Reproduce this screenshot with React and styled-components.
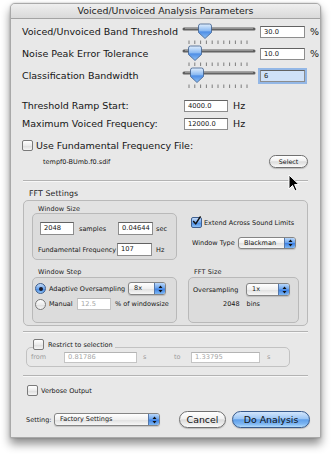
import React from "react";
import styled, { createGlobalStyle } from "styled-components";

const Global = createGlobalStyle`
  html, body { margin: 0; padding: 0; background: #fff; }
  body { font-family: "DejaVu Sans", "Liberation Sans", sans-serif; color: #151515; }
  * { box-sizing: border-box; }
`;

const Page = styled.div`
  width: 334px;
  height: 455px;
  padding: 3px 0 0 10px;
  overflow: hidden;
`;

const Window = styled.div`
  position: relative;
  width: 311px;
  height: 435px;
  background: #e8e8e8;
  border: 1px solid #a9a9a9;
  border-radius: 5px 5px 1px 1px;
  box-shadow: 0 6px 10px rgba(0, 0, 0, 0.45), 0 0 2px rgba(0, 0, 0, 0.25);
  display: flex;
  flex-direction: column;
`;

const TitleBar = styled.div`
  height: 15px;
  border-bottom: 1px solid #a3a3a3;
  border-radius: 4px 4px 0 0;
  background: linear-gradient(#efefef, #d9d9d9);
  font-size: 9.4px;
  line-height: 14px;
  text-align: center;
  color: #222;
`;

const Content = styled.div`
  padding: 7px 12px 0 11px;
  display: flex;
  flex-direction: column;
`;

const SliderRow = styled.div`
  display: flex;
  align-items: flex-start;
  height: 22px;
`;

const Row = styled.div`
  display: flex;
  align-items: center;
  height: ${(p) => p.$h || 12}px;
  margin-top: ${(p) => p.$mt || 0}px;
  margin-left: ${(p) => p.$ml || 0}px;
`;

const Label = styled.span`
  flex: none;
  width: ${(p) => (p.$w ? `${p.$w}px` : "auto")};
  margin-left: ${(p) => p.$ml || 0}px;
  font-size: ${(p) => (p.$small ? 6.5 : 9.5)}px;
  line-height: 12px;
  white-space: nowrap;
  color: ${(p) => (p.$off ? "#9c9c9c" : "#151515")};
`;

const Field = styled.div`
  flex: none;
  width: ${(p) => p.$w}px;
  height: ${(p) => p.$h || 12}px;
  margin-left: ${(p) => p.$ml || 0}px;
  background: ${(p) => (p.$focus ? "#cfe1f8" : "#fff")};
  border: 1px solid ${(p) => (p.$off ? "#c4c4c4" : "#8d8d8d")};
  border-top-color: ${(p) => (p.$off ? "#b4b4b4" : "#626262")};
  box-shadow: ${(p) => (p.$focus ? "0 0 0 2px #93b7e6" : "none")};
  font-size: 6.7px;
  line-height: ${(p) => (p.$h || 12) - 2}px;
  padding-left: 3px;
  color: ${(p) => (p.$off ? "#a5a5a5" : "#111")};
`;

const Check = styled.span`
  flex: none;
  width: 11px;
  height: 11px;
  margin-left: ${(p) => p.$ml || 0}px;
  border: 1px solid ${(p) => (p.$on ? "#3f5f8f" : "#7a7a7a")};
  border-radius: 2px;
  background: ${(p) =>
    p.$on
      ? "linear-gradient(#c5dcf9, #6fa6ec 50%, #4b8de5 55%, #8cc0f5)"
      : "linear-gradient(#ffffff, #ececec 50%, #dedede 55%, #f6f6f6)"};
  display: flex;
  align-items: center;
  justify-content: center;
  overflow: visible;
`;

const Radio = styled(Check)`
  border-radius: 50%;
  border-color: ${(p) => (p.$on ? "#3f5f8f" : "#7a7a7a")};
`;

const Dot = styled.span`
  width: 4px;
  height: 4px;
  border-radius: 50%;
  background: #1b1b2a;
`;

const Separator = styled.div`
  height: 2px;
  margin-top: ${(p) => p.$mt}px;
  margin-left: 1px;
  border-top: 1px solid #b3b3b3;
  border-bottom: 1px solid #f7f7f7;
`;

const Button = styled.div`
  flex: none;
  width: ${(p) => p.$w}px;
  height: ${(p) => p.$h}px;
  margin-left: ${(p) => p.$ml || 0}px;
  border-radius: 999px;
  border: 1px solid ${(p) => (p.$blue ? "#375a8c" : "#707070")};
  background: ${(p) =>
    p.$blue
      ? "linear-gradient(#d3e6fc, #9cc6f5 45%, #5f9fe9 52%, #7db6f2 80%, #b4dcfb)"
      : "linear-gradient(#ffffff, #f1f1f1 45%, #dcdcdc 52%, #ececec 80%, #fbfbfb)"};
  box-shadow: 0 1px 1px rgba(0, 0, 0, 0.2);
  font-size: ${(p) => p.$fs}px;
  line-height: ${(p) => p.$h - 2}px;
  text-align: center;
  color: #111;
`;

const Popup = styled.div`
  flex: none;
  display: flex;
  width: ${(p) => p.$w}px;
  height: ${(p) => p.$h || 12}px;
  margin-left: ${(p) => p.$ml || 0}px;
  border: 1px solid #858585;
  border-radius: 3px;
  background: linear-gradient(#ffffff, #f0f0f0 50%, #e1e1e1 55%, #f7f7f7);
  box-shadow: 0 1px 1px rgba(0, 0, 0, 0.15);
  overflow: hidden;
  font-size: 6.5px;
  line-height: ${(p) => (p.$h || 12) - 2}px;
`;

const PopupText = styled.span`
  flex: 1;
  padding-left: 5px;
  white-space: nowrap;
`;

const PopupCap = styled.span`
  flex: none;
  width: 11px;
  border-left: 1px solid #5577a8;
  background: linear-gradient(#b9d7fa, #6ea6ee 45%, #3f82e4 55%, #7fb8f4);
  display: flex;
  align-items: center;
  justify-content: center;
`;

const GroupTitle = styled.div`
  height: ${(p) => p.$h}px;
  margin-top: ${(p) => p.$mt || 0}px;
  padding-left: ${(p) => p.$pl}px;
  font-size: ${(p) => p.$fs}px;
  line-height: ${(p) => p.$h}px;
  color: #1d1d1d;
  letter-spacing: 0.1px;
`;

const FftBox = styled.div`
  margin: 1px 0 0 1px;
  border: 1px solid #b9b9b9;
  border-radius: 5px;
  background: rgba(0, 0, 0, 0.025);
  padding: 4px 0 2px 8px;
`;

const FftGrid = styled.div`
  display: grid;
  grid-template-columns: 145px 111px;
  column-gap: 11px;
  row-gap: 8px;
`;

const Cell = styled.div`
  display: flex;
  flex-direction: column;
`;

const Inner = styled.div`
  height: ${(p) => p.$h}px;
  border: 1px solid #b9b9b9;
  border-radius: 5px;
  background: rgba(0, 0, 0, 0.025);
  padding: ${(p) => p.$pad};
  display: flex;
  flex-direction: column;
`;

const LegendRow = styled.div`
  position: relative;
  z-index: 1;
  align-self: flex-start;
  display: flex;
  align-items: center;
  height: 11px;
  margin: 6px 0 0 11px;
  padding-right: 2px;
  background: #e8e8e8;
`;

const RestrictBox = styled.div`
  display: flex;
  align-items: center;
  width: 264px;
  height: 20px;
  margin: -3px 0 0 4px;
  padding-left: 4px;
  border: 1px solid #c2c2c2;
  border-radius: 5px;
`;

const Cursor = styled.svg`
  position: absolute;
  left: 277px;
  top: 170px;
`;

const Slider = ({ pos }) => {
  const ticks = Array.from({ length: 11 }, (_, i) => 7 + i * 5.8);
  const c = pos;
  const thumb = `M${c - 6.5},3 Q${c - 6.5},1 ${c - 4.5},1 L${c + 4.5},1 Q${c + 6.5},1 ${c + 6.5},3 L${c + 6.5},9.5 L${c},15.5 L${c - 6.5},9.5 Z`;
  return (
    <svg width="74" height="22" style={{ flex: "none", marginTop: -3 }}>
      <defs>
        <linearGradient id="thumbFill" x1="0" y1="0" x2="0" y2="1">
          <stop offset="0" stopColor="#e2effd" />
          <stop offset="0.45" stopColor="#8dbbf2" />
          <stop offset="0.55" stopColor="#4f8fe6" />
          <stop offset="1" stopColor="#8ec0f4" />
        </linearGradient>
      </defs>
      <line x1="2" y1="6" x2="72" y2="6" stroke="#5e5e5e" strokeWidth="3" strokeLinecap="round" />
      <line x1="3" y1="5.6" x2="71" y2="5.6" stroke="#9a9a9a" strokeWidth="1" />
      {ticks.map((x) => (
        <line key={x} x1={x} y1="17.5" x2={x} y2="21" stroke="#707070" strokeWidth="0.9" />
      ))}
      <path d={thumb} fill="url(#thumbFill)" stroke="#3c5d8c" strokeWidth="0.8" />
    </svg>
  );
};

const CheckBox = ({ on, ml }) => (
  <Check $on={on} $ml={ml}>
    {on && (
      <svg width="11" height="12" viewBox="0 0 11 12" style={{ marginTop: -3 }}>
        <path d="M2 6.5 L4.5 9.5 L10 1" fill="none" stroke="#111" strokeWidth="1.8" strokeLinecap="round" strokeLinejoin="round" />
      </svg>
    )}
  </Check>
);

const RadioButton = ({ on, ml }) => (
  <Radio $on={on} $ml={ml}>
    {on && <Dot />}
  </Radio>
);

const PopupButton = ({ w, h, ml, children }) => (
  <Popup $w={w} $h={h} $ml={ml}>
    <PopupText>{children}</PopupText>
    <PopupCap>
      <svg width="5" height="8" viewBox="0 0 5 8">
        <path d="M2.5 0.5 L4.5 3 L0.5 3 Z M2.5 7.5 L4.5 5 L0.5 5 Z" fill="#111" />
      </svg>
    </PopupCap>
  </Popup>
);

const App = () => (
  <Page>
    <Global />
    <Window>
      <TitleBar>Voiced/Unvoiced Analysis Parameters</TitleBar>
      <Content>
        <SliderRow>
          <Label $w={160}>Voiced/Unvoiced Band Threshold</Label>
          <Slider pos={23} />
          <Field $w={45} $ml={4}>30.0</Field>
          <Label $ml={5}>%</Label>
        </SliderRow>
        <SliderRow>
          <Label $w={160}>Noise Peak Error Tolerance</Label>
          <Slider pos={13} />
          <Field $w={45} $ml={4}>10.0</Field>
          <Label $ml={5}>%</Label>
        </SliderRow>
        <SliderRow>
          <Label $w={160}>Classification Bandwidth</Label>
          <Slider pos={15} />
          <Field $w={45} $ml={4} $focus>6</Field>
        </SliderRow>

        <Row $mt={8}>
          <Label $w={162}>Threshold Ramp Start:</Label>
          <Field $w={44}>4000.0</Field>
          <Label $ml={5}>Hz</Label>
        </Row>
        <Row $mt={6}>
          <Label $w={162}>Maximum Voiced Frequency:</Label>
          <Field $w={44}>12000.0</Field>
          <Label $ml={5}>Hz</Label>
        </Row>
        <Row $mt={10} $h={11}>
          <CheckBox />
          <Label $ml={3}>Use Fundamental Frequency File:</Label>
        </Row>
        <Row $mt={4} $h={13} $ml={21}>
          <Label $small $w={226}>tempf0-BUmb.f0.sdif</Label>
          <Button $w={39} $h={13} $fs={6.3}>Select</Button>
        </Row>

        <Separator $mt={12} />

        <GroupTitle $mt={7} $h={10} $pl={7} $fs={7.8}>FFT Settings</GroupTitle>
        <FftBox>
          <FftGrid>
            <Cell>
              <GroupTitle $h={8} $pl={6} $fs={6.5}>Window Size</GroupTitle>
              <Inner $h={47} $pad="8px 0 0 7px">
                <Row $h={13}>
                  <Field $w={34} $h={13}>2048</Field>
                  <Label $small $w={39} $ml={5}>samples</Label>
                  <Field $w={35} $h={13}>0.04644</Field>
                  <Label $small $ml={3}>sec</Label>
                </Row>
                <Row $h={13} $mt={8} $ml={-2}>
                  <Label $small $w={79}>Fundamental Frequency</Label>
                  <Field $w={35} $h={13}>107</Field>
                  <Label $small $ml={4}>Hz</Label>
                </Row>
              </Inner>
            </Cell>
            <Cell>
              <Row $h={11} $mt={12} $ml={3}>
                <CheckBox on />
                <Label $small $ml={2}>Extend Across Sound Limits</Label>
              </Row>
              <Row $mt={9} $ml={4}>
                <Label $small $w={46}>Window Type</Label>
                <PopupButton w={58}>Blackman</PopupButton>
              </Row>
            </Cell>
            <Cell>
              <GroupTitle $h={9} $pl={6} $fs={6.5}>Window Step</GroupTitle>
              <Inner $h={46} $pad="4px 0 0 2px">
                <Row $h={13}>
                  <RadioButton on />
                  <Label $small $w={79} $ml={3}>Adaptive Oversampling</Label>
                  <PopupButton w={38} h={13}>8x</PopupButton>
                </Row>
                <Row $h={12} $mt={3}>
                  <RadioButton />
                  <Label $small $w={28} $ml={3}>Manual</Label>
                  <Field $w={34} $off>12.5</Field>
                  <Label $small $ml={4}>% of windowsize</Label>
                </Row>
              </Inner>
            </Cell>
            <Cell>
              <GroupTitle $h={9} $pl={6} $fs={6.5}>FFT Size</GroupTitle>
              <Inner $h={46} $pad="5px 0 0 4px">
                <Row $h={13}>
                  <Label $small $w={53}>Oversampling</Label>
                  <PopupButton w={44} h={13}>1x</PopupButton>
                </Row>
                <Row $h={12} $mt={2} $ml={30}>
                  <Label $small>2048</Label>
                  <Label $small $ml={7}>bins</Label>
                </Row>
              </Inner>
            </Cell>
          </FftGrid>
        </FftBox>

        <Separator $mt={5} />

        <LegendRow>
          <CheckBox />
          <Label $small $ml={4}>Restrict to selection</Label>
        </LegendRow>
        <RestrictBox>
          <Label $small $off $w={33}>from</Label>
          <Field $w={73} $h={11} $off>0.81786</Field>
          <Label $small $off $w={31} $ml={6}>s</Label>
          <Label $small $off $w={17}>to</Label>
          <Field $w={69} $h={11} $off>1.33795</Field>
          <Label $small $off $ml={7}>s</Label>
        </RestrictBox>

        <Separator $mt={8} />

        <Row $h={11} $mt={8} $ml={5}>
          <CheckBox />
          <Label $small $ml={3}>Verbose Output</Label>
        </Row>

        <Row $h={17} $mt={15} $ml={4}>
          <Label $small $w={28}>Setting:</Label>
          <PopupButton w={106} h={13}>Factory Settings</PopupButton>
          <Button $w={47} $h={17} $ml={19} $fs={9.4}>Cancel</Button>
          <Button $w={78} $h={17} $ml={6} $fs={9.4} $blue>Do Analysis</Button>
        </Row>
      </Content>

      <Cursor width="12" height="19" viewBox="0 0 12 19">
        <path d="M1 1 L1 15 L4.5 11.5 L7 17 L9 16 L6.6 10.6 L11 10.6 Z" fill="#000" stroke="#fff" strokeWidth="1" strokeLinejoin="round" />
      </Cursor>
    </Window>
  </Page>
);

export default App;
